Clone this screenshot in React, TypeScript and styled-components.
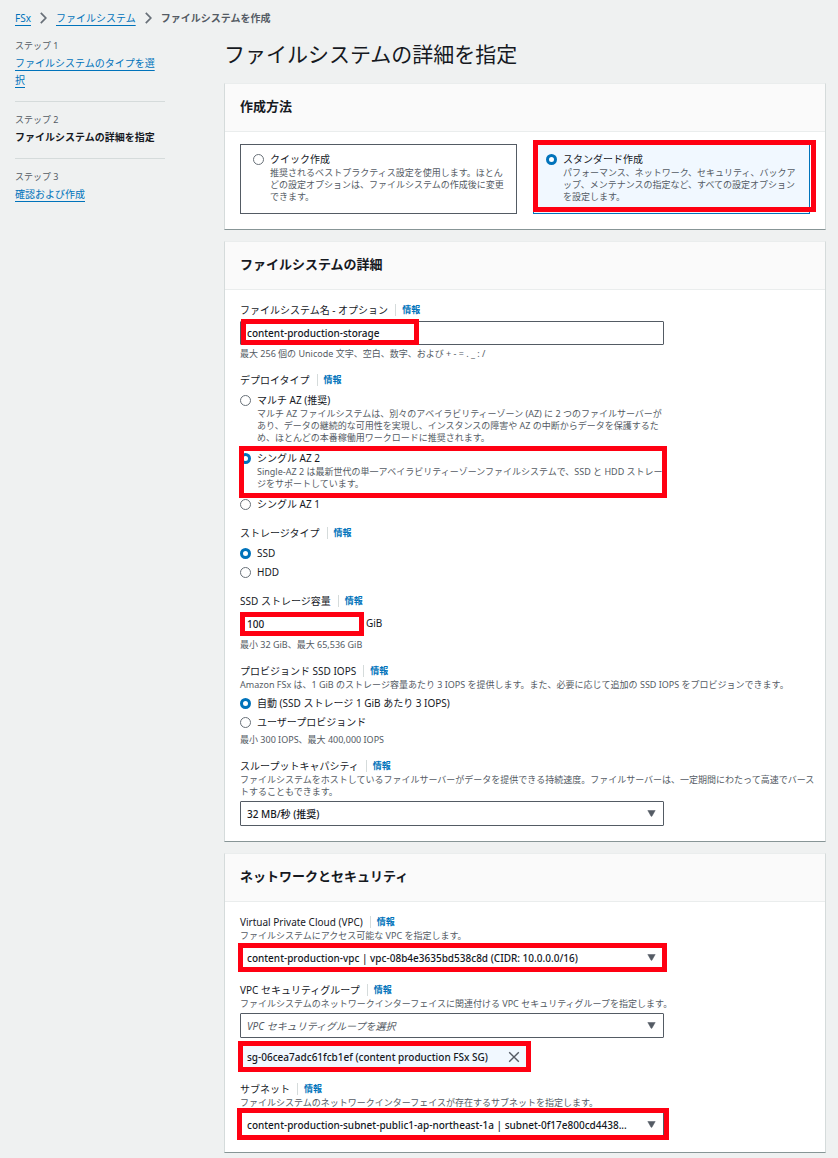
import React, { useId, useState } from 'react';
import styled, { createGlobalStyle, css } from 'styled-components';

const color = {
  page: '#eff1f1',
  text: '#16191f',
  muted: '#545b64',
  link: '#0073bb',
  line: '#d5dbdb',
  softLine: '#eaeded',
  control: '#545b64',
  selected: '#f1f8ff',
  mark: '#ff0012',
};

const GlobalStyle = createGlobalStyle`
  *, *::before, *::after { box-sizing: border-box; }
  body {
    margin: 0;
    background: ${color.page};
    color: ${color.text};
    font-family: "Noto Sans", "Noto Sans CJK JP", sans-serif;
    font-size: 10px;
    line-height: 16px;
  }
  button, input, select { font: inherit; color: inherit; }
`;

const Page = styled.div`
  min-height: 100vh;
  padding: 10px 12px 5px 15px;
`;

const Breadcrumbs = styled.ol`
  display: flex;
  align-items: center;
  gap: 9px;
  margin: 0 0 14px;
  padding: 0;
  list-style: none;
`;

const Crumb = styled.li<{ $current?: boolean }>`
  display: flex;
  align-items: center;
  gap: 9px;
  ${(p) => p.$current && css`
    color: ${color.muted};
    font-weight: 700;
  `}
`;

const TextLink = styled.a`
  color: ${color.link};
  text-decoration: underline;
  text-decoration-thickness: 1px;
  text-underline-offset: 3px;
`;

const Columns = styled.div`
  display: flex;
  align-items: flex-start;
  gap: 59px;
`;

const Steps = styled.ol`
  flex: 0 0 150px;
  margin: 0;
  padding: 0;
  list-style: none;
`;

const Step = styled.li`
  padding-bottom: 12px;
  line-height: 17px;
  & + & {
    border-top: 1px solid ${color.line};
    padding-top: 12px;
  }
`;

const StepNumber = styled.div`
  margin-bottom: 3px;
  color: ${color.muted};
  font-size: 9px;
  line-height: 12px;
`;

const StepTitle = styled.div<{ $active?: boolean }>`
  padding-right: 4px;
  font-weight: ${(p) => (p.$active ? 700 : 400)};
`;

const Main = styled.main`
  flex: 1;
  min-width: 0;
`;

const Title = styled.h1`
  margin: 0 0 15px;
  font-size: 21px;
  font-weight: 400;
  line-height: 28px;
`;

const Panel = styled.section`
  margin-bottom: 11px;
  background: #fff;
  border: 1px solid ${color.line};
  border-top-color: ${color.softLine};
  border-bottom-color: #879596;
  &:last-child { margin-bottom: 0; }
`;

const PanelTitle = styled.h2`
  margin: 0;
  padding: 12px 15px 15px;
  background: #fafafa;
  border-bottom: 1px solid ${color.softLine};
  font-size: 13px;
  line-height: 20px;
  font-weight: 700;
`;

const PanelBody = styled.div`
  display: flex;
  flex-direction: column;
  gap: 12px;
  padding: 12px 15px 15px;
`;

const Cards = styled.div`
  display: grid;
  grid-template-columns: 1fr 1fr;
  gap: 16px;
`;

const Card = styled.div<{ $selected?: boolean }>`
  position: relative;
  padding: 6px 12px 7px;
  border: 1px solid ${(p) => (p.$selected ? color.link : color.control)};
  background: ${(p) => (p.$selected ? color.selected : '#fff')};
`;

const Field = styled.div`
  min-width: 0;
`;

const FieldHead = styled.div`
  display: flex;
  align-items: center;
  height: 16px;
`;

const InfoLink = styled.a`
  margin-left: 7px;
  padding-left: 6px;
  border-left: 1px solid ${color.line};
  color: ${color.link};
  font-size: 9px;
  font-weight: 700;
  line-height: 12px;
  text-decoration: none;
`;

const Description = styled.div`
  color: ${color.muted};
  font-size: 9px;
  line-height: 12px;
`;

/* Runs a little into the panel's right padding. */
const FieldDescription = styled(Description)`
  margin-right: -8px;
`;

const Hint = styled(Description)`
  margin-top: 3px;
`;

const Control = styled.div`
  position: relative;
  display: flex;
  max-width: 424px;
  margin-top: 3px;
`;

const TextInput = styled.input`
  width: 100%;
  min-width: 0;
  height: 24px;
  padding: 0 6px;
  border: 1px solid ${color.control};
  border-radius: 1px;
  background: #fff;
  font-weight: 500;
`;

const Select = styled.select<{ $placeholder?: boolean }>`
  appearance: none;
  width: 100%;
  height: 25px;
  padding: 0 24px 0 6px;
  border: 1px solid ${color.control};
  border-radius: 1px;
  background: #fff;
  font-weight: 500;
  text-overflow: ellipsis;
  ${(p) => p.$placeholder && css`
    color: ${color.muted};
    font-style: italic;
    font-weight: 400;
  `}
`;

const Caret = styled.svg`
  position: absolute;
  top: 9px;
  right: 8px;
  pointer-events: none;
`;

const WithUnit = styled.div`
  display: flex;
  align-items: center;
  gap: 5px;
`;

const SizeControl = styled(Control)`
  flex: 0 1 121px;
`;

const Options = styled.div`
  display: flex;
  flex-direction: column;
  gap: 3px;
  max-width: 424px;
  padding: 4px 0 1px;
`;

const Option = styled.div<{ $described?: boolean }>`
  position: relative;
  display: grid;
  grid-template-columns: 11px 1fr;
  column-gap: 6px;
  align-items: center;
  padding-bottom: ${(p) => (p.$described ? 3 : 0)}px;
`;

const OptionText = styled(Description)`
  grid-column: 2;
`;

const Radio = styled.input`
  appearance: none;
  width: 11px;
  height: 11px;
  margin: 0;
  border: 1px solid #687078;
  border-radius: 50%;
  background: #fff;
  &:checked { border: 3px solid ${color.link}; }
`;

const Token = styled.div`
  position: relative;
  display: flex;
  align-items: center;
  justify-content: space-between;
  width: 288px;
  max-width: 100%;
  height: 25px;
  margin-top: 6px;
  padding: 0 5px 0 6px;
  border: 1px solid ${color.link};
  background: ${color.selected};
  font-weight: 500;
`;

const RemoveButton = styled.button`
  display: flex;
  padding: 2px;
  border: 0;
  background: none;
  color: ${color.muted};
`;

/* Red frame that lies over the part of the form being pointed out. */
const Marker = styled.span<{ $inset: string; $width?: string; $weight?: number }>`
  position: absolute;
  z-index: 1;
  inset: ${(p) => p.$inset};
  width: ${(p) => p.$width ?? 'auto'};
  border: ${(p) => p.$weight ?? 5}px solid ${color.mark};
  pointer-events: none;
`;

const Chevron = () => (
  <svg width="7" height="12" viewBox="0 0 7 12" fill="none" stroke="#687078" strokeWidth="1.7" aria-hidden="true">
    <path d="M0.8 0.8l5 5.2-5 5.2" />
  </svg>
);

const Arrow = () => (
  <Caret width="9" height="7" viewBox="0 0 9 7" aria-hidden="true">
    <path d="M0.8 0.5h7.4L4.9 6.3h-0.8z" fill={color.control} stroke={color.control} strokeWidth="0.5" strokeLinejoin="round" />
  </Caret>
);

function Head({ label, htmlFor, id }: { label: string; htmlFor?: string; id?: string }) {
  return (
    <FieldHead>
      {htmlFor ? <label htmlFor={htmlFor}>{label}</label> : <span id={id}>{label}</span>}
      <InfoLink href="#info">情報</InfoLink>
    </FieldHead>
  );
}

type Choice = { value: string; label: string; text?: string; marked?: boolean };

function RadioRow({ choice, name, checked, onPick }: {
  choice: Choice; name: string; checked: boolean; onPick: () => void;
}) {
  const id = useId();
  return (
    <Option $described={!!choice.text}>
      <Radio type="radio" id={id} name={name} checked={checked} onChange={onPick} />
      <label htmlFor={id}>{choice.label}</label>
      {choice.text && <OptionText>{choice.text}</OptionText>}
      {choice.marked && <Marker $inset="-4px -3px -5px -1px" />}
    </Option>
  );
}

function RadioField({ label, description, hint, choices, initial }: {
  label: string; description?: string; hint?: string; choices: Choice[]; initial: string;
}) {
  const id = useId();
  const [value, setValue] = useState(initial);
  return (
    <Field>
      <Head label={label} id={id} />
      {description && <FieldDescription>{description}</FieldDescription>}
      <Options role="radiogroup" aria-labelledby={id}>
        {choices.map((c) => (
          <RadioRow key={c.value} choice={c} name={id + 'r'} checked={value === c.value} onPick={() => setValue(c.value)} />
        ))}
      </Options>
      {hint && <Hint>{hint}</Hint>}
    </Field>
  );
}

function SelectField({ label, description, option, placeholder, marker, children }: {
  label: string; description: string; option: string; placeholder?: boolean; marker?: string; children?: React.ReactNode;
}) {
  const id = useId();
  return (
    <Field>
      <Head label={label} htmlFor={id} />
      <FieldDescription>{description}</FieldDescription>
      <Control>
        <Select id={id} $placeholder={placeholder}>
          <option>{option}</option>
        </Select>
        <Arrow />
        {marker && <Marker $inset={marker} />}
      </Control>
      {children}
    </Field>
  );
}

const methods: Choice[] = [
  { value: 'quick', label: 'クイック作成', text: '推奨されるベストプラクティス設定を使用します。ほとんどの設定オプションは、ファイルシステムの作成後に変更できます。' },
  { value: 'standard', label: 'スタンダード作成', text: 'パフォーマンス、ネットワーク、セキュリティ、バックアップ、メンテナンスの指定など、すべての設定オプションを設定します。' },
];

const deployments: Choice[] = [
  { value: 'multi', label: 'マルチ AZ (推奨)', text: 'マルチ AZ ファイルシステムは、別々のアベイラビリティーゾーン (AZ) に 2 つのファイルサーバーがあり、データの継続的な可用性を実現し、インスタンスの障害や AZ の中断からデータを保護するため、ほとんどの本番稼働用ワークロードに推奨されます。' },
  { value: 'single2', label: 'シングル AZ 2', text: 'Single-AZ 2 は最新世代の単一アベイラビリティーゾーンファイルシステムで、SSD と HDD ストレージをサポートしています。', marked: true },
  { value: 'single1', label: 'シングル AZ 1' },
];

export default function App() {
  const [method, setMethod] = useState('standard');
  return (
    <>
      <GlobalStyle />
      <Page>
        <nav aria-label="パンくずリスト">
          <Breadcrumbs>
            <Crumb><TextLink href="#fsx">FSx</TextLink><Chevron /></Crumb>
            <Crumb><TextLink href="#file-systems">ファイルシステム</TextLink><Chevron /></Crumb>
            <Crumb $current>ファイルシステムを作成</Crumb>
          </Breadcrumbs>
        </nav>
        <Columns>
          <Steps>
            <Step>
              <StepNumber>ステップ 1</StepNumber>
              <StepTitle><TextLink href="#step1">ファイルシステムのタイプを選択</TextLink></StepTitle>
            </Step>
            <Step>
              <StepNumber>ステップ 2</StepNumber>
              <StepTitle $active>ファイルシステムの詳細を指定</StepTitle>
            </Step>
            <Step>
              <StepNumber>ステップ 3</StepNumber>
              <StepTitle><TextLink href="#step3">確認および作成</TextLink></StepTitle>
            </Step>
          </Steps>
          <Main>
            <Title>ファイルシステムの詳細を指定</Title>

            <Panel>
              <PanelTitle>作成方法</PanelTitle>
              <PanelBody>
                <Cards role="radiogroup" aria-label="作成方法">
                  {methods.map((m) => (
                    <Card key={m.value} $selected={method === m.value}>
                      <RadioRow choice={m} name="method" checked={method === m.value} onPick={() => setMethod(m.value)} />
                      {m.value === 'standard' && <Marker $inset="-5px -7px 1px -1px" />}
                    </Card>
                  ))}
                </Cards>
              </PanelBody>
            </Panel>

            <Panel>
              <PanelTitle>ファイルシステムの詳細</PanelTitle>
              <PanelBody>
                <Field>
                  <Head label="ファイルシステム名 - オプション" htmlFor="fs-name" />
                  <Control>
                    <TextInput id="fs-name" defaultValue="content-production-storage" />
                    <Marker $inset="-2px auto 0 1px" $width="178px" />
                  </Control>
                  <Hint>最大 256 個の Unicode 文字、空白、数字、および + - = . _ : /</Hint>
                </Field>
                <RadioField label="デプロイタイプ" choices={deployments} initial="single2" />
                <RadioField
                  label="ストレージタイプ"
                  choices={[{ value: 'ssd', label: 'SSD' }, { value: 'hdd', label: 'HDD' }]}
                  initial="ssd"
                />
                <Field>
                  <Head label="SSD ストレージ容量" htmlFor="capacity" />
                  <WithUnit>
                    <SizeControl>
                      <TextInput id="capacity" defaultValue="100" inputMode="numeric" />
                      <Marker $inset="0 -3px 0 0" />
                    </SizeControl>
                    <span>GiB</span>
                  </WithUnit>
                  <Hint>最小 32 GiB、最大 65,536 GiB</Hint>
                </Field>
                <RadioField
                  label="プロビジョンド SSD IOPS"
                  description="Amazon FSx は、1 GiB のストレージ容量あたり 3 IOPS を提供します。また、必要に応じて追加の SSD IOPS をプロビジョンできます。"
                  hint="最小 300 IOPS、最大 400,000 IOPS"
                  choices={[
                    { value: 'auto', label: '自動 (SSD ストレージ 1 GiB あたり 3 IOPS)' },
                    { value: 'user', label: 'ユーザープロビジョンド' },
                  ]}
                  initial="auto"
                />
                <SelectField
                  label="スループットキャパシティ"
                  description="ファイルシステムをホストしているファイルサーバーがデータを提供できる持続速度。ファイルサーバーは、一定期間にわたって高速でバーストすることもできます。"
                  option="32 MB/秒 (推奨)"
                />
              </PanelBody>
            </Panel>

            <Panel>
              <PanelTitle>ネットワークとセキュリティ</PanelTitle>
              <PanelBody>
                <SelectField
                  label="Virtual Private Cloud (VPC)"
                  description="ファイルシステムにアクセス可能な VPC を指定します。"
                  option="content-production-vpc | vpc-08b4e3635bd538c8d (CIDR: 10.0.0.0/16)"
                  marker="-2px -3px -2px -2px"
                />
                <SelectField
                  label="VPC セキュリティグループ"
                  description="ファイルシステムのネットワークインターフェイスに関連付ける VPC セキュリティグループを指定します。"
                  option="VPC セキュリティグループを選択"
                  placeholder
                >
                  <Token>
                    <span>sg-06cea7adc61fcb1ef (content production FSx SG)</span>
                    <RemoveButton type="button" aria-label="削除">
                      <svg width="12" height="12" viewBox="0 0 12 12" stroke="currentColor" strokeWidth="1.4" aria-hidden="true">
                        <path d="M1.2 1.2l9.6 9.6M10.8 1.2l-9.6 9.6" />
                      </svg>
                    </RemoveButton>
                    <Marker $inset="-4px -4px -4px -3px" />
                  </Token>
                </SelectField>
                <SelectField
                  label="サブネット"
                  description="ファイルシステムのネットワークインターフェイスが存在するサブネットを指定します。"
                  option="content-production-subnet-public1-ap-northeast-1a | subnet-0f17e800cd4438..."
                  marker="-4px -5px -3px -3px"
                />
              </PanelBody>
            </Panel>
          </Main>
        </Columns>
      </Page>
    </>
  );
}
